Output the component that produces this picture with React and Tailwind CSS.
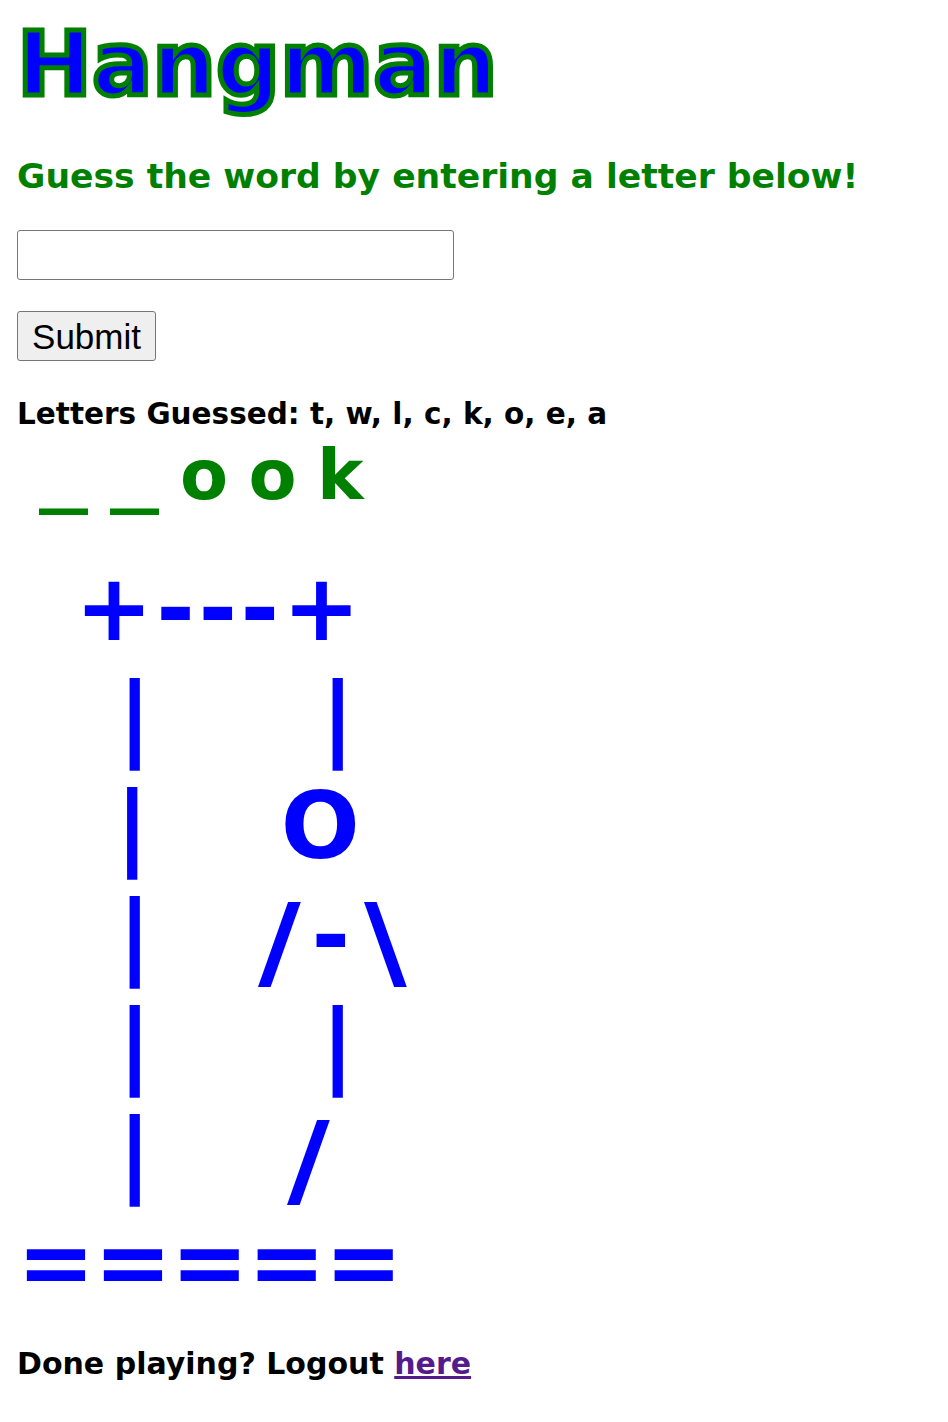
// each row of the gallows gets its own spacing so the DejaVu glyphs land where Verdana put them
const GALLOWS = [
  { text: ' +---+', cls: 'pl-[22px] tracking-[3.5px]' },
  { text: '   |     |', cls: 'tracking-[1.2px]' },
  { text: '   |    O', cls: 'tracking-[0.4px]' },
  { text: 'body', cls: 'tracking-[1.2px]' },
  { text: '   |     |', cls: 'tracking-[1.2px]' },
  { text: '   |    /', cls: 'tracking-[1.2px]' },
  { text: '=====', cls: 'tracking-[-1px]' },
]

function Slash({ back, className = '' }) {
  return (
    <span className={`inline-block origin-top-left scale-x-[1.26] scale-y-[1.12] tracking-normal ${className}`}>
      {back ? '\\' : '/'}
    </span>
  )
}

export default function App() {
  return (
    <div className="min-h-[1422px] bg-white px-[17px] text-black font-['DejaVu_Sans',Verdana,sans-serif]">
      {/* Title */}
      <h1 className="pt-[14px] text-[89.5px] leading-[100px] font-bold text-[#0000ff] [-webkit-text-stroke:5px_#008000]">
        Hangman
      </h1>

      <h2 className="mt-[42px] text-[34.6px] leading-[40px] font-bold text-[#008000]">
        Guess the word by entering a letter below!
      </h2>

      {/* Form */}
      <form className="mt-[34px]" onSubmit={e => e.preventDefault()}>
        <input
          type="text"
          className="block w-[437px] h-[50px] rounded-[3px] border border-[#767676] bg-white px-2 outline-none"
        />
        <button
          type="submit"
          className="mt-[31px] block h-[50px] w-[139px] rounded-[3px] border border-[#767676] bg-[#efefef] text-[35px] leading-none font-['Liberation_Sans',Arial,sans-serif] text-black"
        >
          Submit
        </button>
      </form>

      <p className="mt-[36px] text-[29.5px] leading-[34px] font-bold">
        Letters Guessed: t, w, l, c, k, o, e, a
      </p>

      {/* Word so far */}
      <p className="mt-[6px] text-[70px] leading-[76px] font-bold text-[#008000] whitespace-pre tracking-[-2px]">
        {' '}
        <span className="inline-block w-[48px] origin-left scale-x-[1.4]">_</span>
        {' '}
        <span className="inline-block w-[48px] origin-left scale-x-[1.4]">_</span>
        {' o o k'}
      </p>

      {/* Gallows */}
      <div className="mt-[41px] text-[93px] leading-[109px] font-bold text-[#0000ff] whitespace-pre">
        {GALLOWS.map((row, i) => (
          <div key={i} className={row.cls}>
            {row.text === 'body' ? (
              <>
                {'   |   '}
                <span className="ml-[4px] tracking-normal">
                  <Slash className="mr-[20px]" />-<Slash back className="ml-[14px]" />
                </span>
              </>
            ) : row.text.endsWith('/') ? (
              <>
                {row.text.slice(0, -1)}
                <Slash />
              </>
            ) : row.text}
          </div>
        ))}
      </div>

      <p className="mt-[29px] text-[30px] leading-[36px] font-bold">
        Done playing? Logout{' '}
        <a href="#" className="text-[#551a8b] underline">here</a>
      </p>
    </div>
  )
}
